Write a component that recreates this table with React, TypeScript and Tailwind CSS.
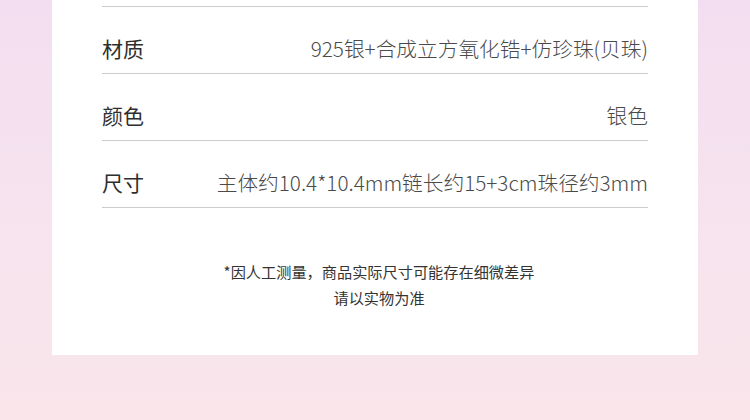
import { type FC } from "react";

interface Spec {
	label: string;
	value: string;
}

const specs: Spec[] = [
	{ label: "材质", value: "925银+合成立方氧化锆+仿珍珠(贝珠)" },
	{ label: "颜色", value: "银色" },
	{ label: "尺寸", value: "主体约10.4*10.4mm链长约15+3cm珠径约3mm" },
];

const SpecRow: FC<Spec> = ({ label, value }) => {
	return (
		<div className="h-[67px] flex items-end justify-between pb-[13px] border-b border-[#cbcbcb]">
			<span className="text-[21px] leading-[23px] text-[#2e2e2e]">{label}</span>
			<span className="text-[20.7px] leading-[23px] font-light text-[#4a4a4a]">{value}</span>
		</div>
	);
};

export default function App() {
	return (
		<div
			className="w-[750px] h-[420px] overflow-hidden bg-gradient-to-b from-[#f2def0] via-[#f6e3ee] to-[#f9e5ea]"
			style={{ fontFamily: '"Noto Sans CJK SC", "Noto Sans", sans-serif' }}
		>
			<div className="mx-[52px] w-[646px] bg-white pt-[6px] px-[50px] pb-[45px]">
				<div className="border-t border-[#cbcbcb]">
					{specs.map((s) => (
						<SpecRow key={s.label} label={s.label} value={s.value} />
					))}
				</div>
				<div className="mt-[50px] pl-[8px] flex flex-col items-center text-[15.2px] leading-[26px] text-[#333]">
					<p>*因人工测量，商品实际尺寸可能存在细微差异</p>
					<p>请以实物为准</p>
				</div>
			</div>
		</div>
	);
}
